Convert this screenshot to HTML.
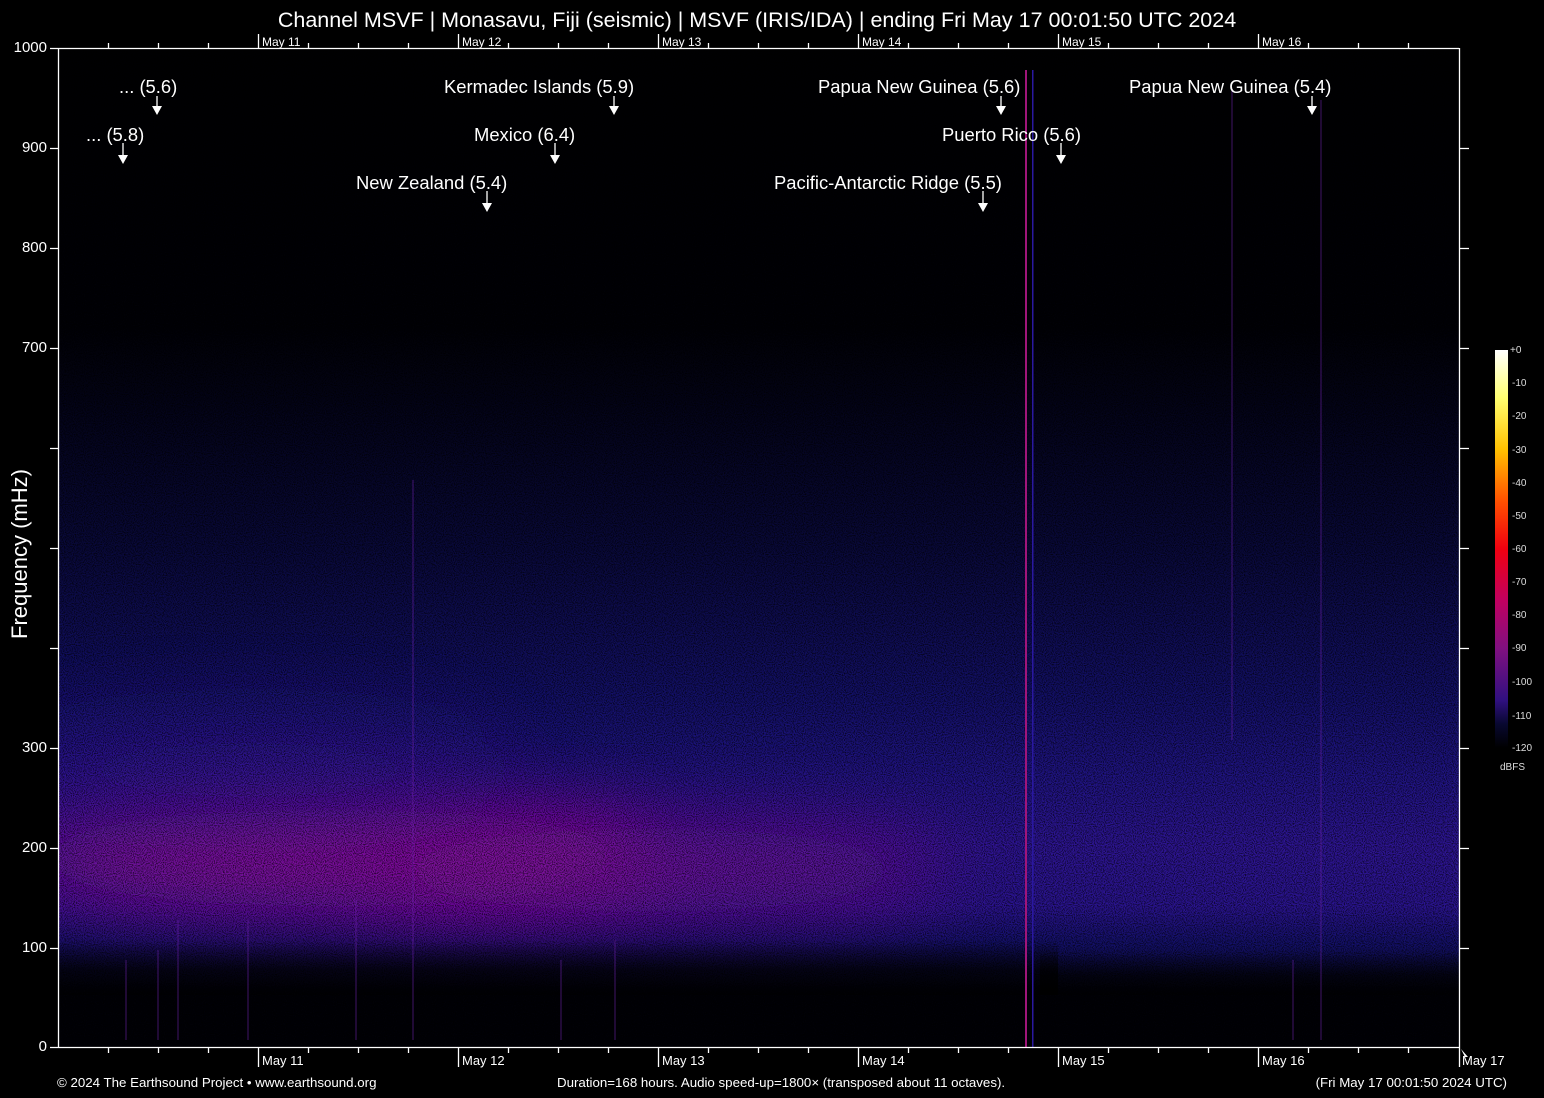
<!DOCTYPE html>
<html><head><meta charset="utf-8"><style>
html,body{margin:0;padding:0;background:#000;width:1544px;height:1098px;overflow:hidden;font-family:"Liberation Sans",Arial,sans-serif;color:#fff}
.t{position:absolute;white-space:nowrap}
.y{position:absolute;left:0;width:47px;text-align:right;font-size:15px}
</style></head><body>
<svg width="1544" height="1098" style="position:absolute;left:0;top:0" xmlns="http://www.w3.org/2000/svg">
<defs>
<linearGradient id="bg" x1="0" y1="0" x2="0" y2="1">
<stop offset="0" stop-color="#000002"/>
<stop offset="0.28" stop-color="#010106"/>
<stop offset="0.35" stop-color="#030316"/>
<stop offset="0.5" stop-color="#09093a"/>
<stop offset="0.65" stop-color="#131068"/>
<stop offset="0.73" stop-color="#201484"/>
<stop offset="0.8" stop-color="#2e1594"/>
<stop offset="0.86" stop-color="#2a1490"/>
<stop offset="0.895" stop-color="#14106a"/>
<stop offset="0.93" stop-color="#0a0a40"/>
<stop offset="0.95" stop-color="#030314"/>
<stop offset="1" stop-color="#000004"/>
</linearGradient>
<filter id="bl" x="-50%" y="-100%" width="200%" height="300%"><feGaussianBlur stdDeviation="40"/></filter>
<filter id="nz"><feTurbulence type="fractalNoise" baseFrequency="0.9" numOctaves="1" seed="3"/><feColorMatrix values="0 0 0 0 0  0 0 0 0 0  0 0 0 0 0  0 0 0 -3 1.8"/></filter>
<clipPath id="cp"><rect x="58" y="48" width="1401" height="999"/></clipPath>
<linearGradient id="bot" x1="0" y1="0" x2="0" y2="1"><stop offset="0" stop-color="#000" stop-opacity="0"/><stop offset="0.5" stop-color="#000" stop-opacity="0.7"/><stop offset="1" stop-color="#000" stop-opacity="0.9"/></linearGradient>
</defs>
<g clip-path="url(#cp)">
<rect x="58" y="48" width="1401" height="999" fill="url(#bg)"/>
<ellipse cx="330" cy="858" rx="330" ry="48" fill="#a010a0" opacity="0.9" filter="url(#bl)"/>
<ellipse cx="650" cy="870" rx="300" ry="42" fill="#8a10a0" opacity="0.75" filter="url(#bl)"/>
<ellipse cx="250" cy="770" rx="260" ry="55" fill="#3a18a0" opacity="0.45" filter="url(#bl)"/>
<rect x="58" y="940" width="1000" height="60" fill="url(#bot)"/>
<rect x="1040" y="950" width="420" height="50" fill="url(#bot)"/>
<rect x="58" y="995" width="1401" height="52" fill="#010106"/>
<rect x="58" y="48" width="1401" height="999" filter="url(#nz)" opacity="0.7"/>
<rect x="1025" y="70" width="2" height="977" fill="#a0157a"/>
<rect x="1032" y="70" width="1.5" height="977" fill="#2a18a0"/>
<g stroke="#6a20a8" stroke-width="1" opacity="0.6">
<line x1="126" y1="960" x2="126" y2="1040"/><line x1="158" y1="950" x2="158" y2="1040"/><line x1="178" y1="920" x2="178" y2="1040"/><line x1="248" y1="920" x2="248" y2="1040"/><line x1="356" y1="900" x2="356" y2="1040"/><line x1="413" y1="480" x2="413" y2="1040"/><line x1="561" y1="960" x2="561" y2="1040"/><line x1="615" y1="940" x2="615" y2="1040"/><line x1="1232" y1="90" x2="1232" y2="740"/><line x1="1321" y1="100" x2="1321" y2="1040"/><line x1="1293" y1="960" x2="1293" y2="1040"/>
</g>
</g>
<g stroke="#fff" stroke-width="1.3" fill="none">
<line x1="58.5" y1="48" x2="58.5" y2="1047"/><line x1="1459.5" y1="48" x2="1459.5" y2="1047"/>
<line x1="58" y1="1047.5" x2="1459" y2="1047.5"/><line x1="58" y1="48.5" x2="1459" y2="48.5"/>
<path d="M50 48.5H58M50 148.5H58M50 248.5H58M50 348.5H58M50 448.5H58M50 548.5H58M50 648.5H58M50 748.5H58M50 848.5H58M50 948.5H58M50 1047.5H58"/>
<path d="M1459 148.5H1469M1459 248.5H1469M1459 348.5H1469M1459 448.5H1469M1459 548.5H1469M1459 648.5H1469M1459 748.5H1469M1459 848.5H1469M1459 948.5H1469"/>
<path d="M108.5 1047v6M158.5 1047v6M208.5 1047v6M308.5 1047v6M358.5 1047v6M408.5 1047v6M508.5 1047v6M558.5 1047v6M608.5 1047v6M708.5 1047v6M758.5 1047v6M808.5 1047v6M908.5 1047v6M958.5 1047v6M1008.5 1047v6M1108.5 1047v6M1158.5 1047v6M1208.5 1047v6M1308.5 1047v6M1358.5 1047v6M1408.5 1047v6"/>
<path d="M258.5 1047v20M458.5 1047v20M658.5 1047v20M858.5 1047v20M1058.5 1047v20M1258.5 1047v20M1459.5 1047v20"/>
<path d="M108.5 48v-5M158.5 48v-5M208.5 48v-5M308.5 48v-5M358.5 48v-5M408.5 48v-5M508.5 48v-5M558.5 48v-5M608.5 48v-5M708.5 48v-5M758.5 48v-5M808.5 48v-5M908.5 48v-5M958.5 48v-5M1008.5 48v-5M1108.5 48v-5M1158.5 48v-5M1208.5 48v-5M1308.5 48v-5M1358.5 48v-5M1408.5 48v-5"/>
<path d="M258.5 48v-14M458.5 48v-14M658.5 48v-14M858.5 48v-14M1058.5 48v-14M1258.5 48v-14"/>
</g>
<g stroke="#fff" stroke-width="1.3"><line x1="157" y1="96" x2="157" y2="106"/><line x1="123" y1="143" x2="123" y2="155"/><line x1="614" y1="96" x2="614" y2="106"/><line x1="555" y1="143" x2="555" y2="155"/><line x1="487" y1="191" x2="487" y2="203"/><line x1="1001" y1="96" x2="1001" y2="106"/><line x1="1061" y1="143" x2="1061" y2="155"/><line x1="983" y1="191" x2="983" y2="203"/><line x1="1312" y1="96" x2="1312" y2="106"/></g>
<g fill="#fff"><path d="M152 106h10l-5 9z"/><path d="M118 155h10l-5 9z"/><path d="M609 106h10l-5 9z"/><path d="M550 155h10l-5 9z"/><path d="M482 203h10l-5 9z"/><path d="M996 106h10l-5 9z"/><path d="M1056 155h10l-5 9z"/><path d="M978 203h10l-5 9z"/><path d="M1307 106h10l-5 9z"/><path d="M1461 1049l7 8-3 0z"/></g>
<defs><linearGradient id="cb" x1="0" y1="0" x2="0" y2="1"><stop offset="0" stop-color="#fff"/><stop offset="0.12" stop-color="#ffff70"/><stop offset="0.25" stop-color="#ffc000"/><stop offset="0.38" stop-color="#ff5000"/><stop offset="0.5" stop-color="#f00010"/><stop offset="0.63" stop-color="#c00060"/><stop offset="0.75" stop-color="#801080"/><stop offset="0.88" stop-color="#301080"/><stop offset="0.94" stop-color="#080830"/><stop offset="1" stop-color="#000"/></linearGradient></defs>
<rect x="1495" y="350" width="13" height="398" fill="url(#cb)"/>
</svg>
<div class="t" style="left:0;width:1514px;top:8px;text-align:center;font-size:21.5px">Channel MSVF | Monasavu, Fiji (seismic) | MSVF (IRIS/IDA) | ending Fri May 17 00:01:50 UTC 2024</div>
<div class="y" style="top:39px">1000</div><div class="y" style="top:139px">900</div><div class="y" style="top:239px">800</div><div class="y" style="top:339px">700</div><div class="y" style="top:739px">300</div><div class="y" style="top:839px">200</div><div class="y" style="top:939px">100</div><div class="y" style="top:1038px">0</div>
<div class="t" style="left:-80px;top:541px;width:200px;text-align:center;font-size:22px;transform:rotate(-90deg)">Frequency (mHz)</div>
<div style="font-size:12px">
<div class="t" style="left:262px;top:35px">May 11</div><div class="t" style="left:462px;top:35px">May 12</div><div class="t" style="left:662px;top:35px">May 13</div><div class="t" style="left:862px;top:35px">May 14</div><div class="t" style="left:1062px;top:35px">May 15</div><div class="t" style="left:1262px;top:35px">May 16</div>
</div>
<div style="font-size:13px">
<div class="t" style="left:262px;top:1053px">May 11</div><div class="t" style="left:462px;top:1053px">May 12</div><div class="t" style="left:662px;top:1053px">May 13</div><div class="t" style="left:862px;top:1053px">May 14</div><div class="t" style="left:1062px;top:1053px">May 15</div><div class="t" style="left:1262px;top:1053px">May 16</div><div class="t" style="left:1462px;top:1053px">May 17</div>
</div>
<div style="font-size:18.4px">
<div class="t" style="left:119px;top:76px">... (5.6)</div>
<div class="t" style="left:86px;top:124px">... (5.8)</div>
<div class="t" style="left:444px;top:76px">Kermadec Islands (5.9)</div>
<div class="t" style="left:474px;top:124px">Mexico (6.4)</div>
<div class="t" style="left:356px;top:172px">New Zealand (5.4)</div>
<div class="t" style="left:818px;top:76px">Papua New Guinea (5.6)</div>
<div class="t" style="left:942px;top:124px">Puerto Rico (5.6)</div>
<div class="t" style="left:774px;top:172px">Pacific-Antarctic Ridge (5.5)</div>
<div class="t" style="left:1129px;top:76px">Papua New Guinea (5.4)</div>
</div>
<div style="font-size:10px;color:#ddd">
<div class="t" style="left:1510px;top:345px">+0</div><div class="t" style="left:1512px;top:378px">-10</div><div class="t" style="left:1512px;top:411px">-20</div><div class="t" style="left:1512px;top:445px">-30</div><div class="t" style="left:1512px;top:478px">-40</div><div class="t" style="left:1512px;top:511px">-50</div><div class="t" style="left:1512px;top:544px">-60</div><div class="t" style="left:1512px;top:577px">-70</div><div class="t" style="left:1512px;top:610px">-80</div><div class="t" style="left:1512px;top:643px">-90</div><div class="t" style="left:1512px;top:677px">-100</div><div class="t" style="left:1512px;top:711px">-110</div><div class="t" style="left:1512px;top:743px">-120</div><div class="t" style="left:1500px;top:762px">dBFS</div>
</div>
<div style="font-size:13.3px">
<div class="t" style="left:57px;top:1075px">© 2024 The Earthsound Project • www.earthsound.org</div>
<div class="t" style="left:557px;top:1075px">Duration=168 hours. Audio speed-up=1800× (transposed about 11 octaves).</div>
<div class="t" style="right:37px;top:1075px">(Fri May 17 00:01:50 2024 UTC)</div>
</div>
</body></html>
